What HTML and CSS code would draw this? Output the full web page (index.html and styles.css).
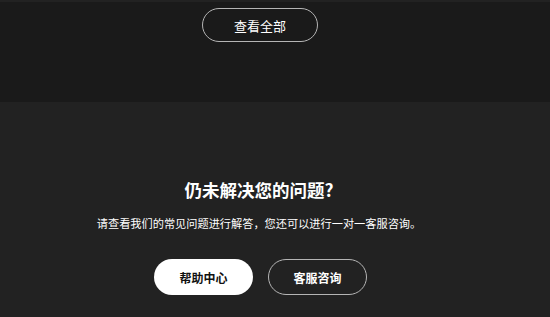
FILE: index.html
```html
<!DOCTYPE html>
<html lang="zh">
<head>
<meta charset="utf-8">
<link rel="stylesheet" href="styles.css">
</head>
<body>
<section class="more">
  <a class="btn btn-outline btn-more">查看全部</a>
</section>
<section class="help">
  <h2 class="help-title">仍未解决您的问题?</h2>
  <p class="help-text">请查看我们的常见问题进行解答，您还可以进行一对一客服咨询。</p>
  <div class="help-actions">
    <a class="btn btn-solid">帮助中心</a>
    <a class="btn btn-outline btn-bold">客服咨询</a>
  </div>
</section>
</body>
</html>
```
FILE: styles.css
```css
html, body {
  margin: 0;
  padding: 0;
  background: #222222;
  font-family: "Noto Sans CJK SC", "Noto Sans", sans-serif;
  color: #ffffff;
}
.more {
  margin-top: 2px;
  height: 100px;
  background: #1a1a1a;
  display: flex;
  justify-content: center;
  align-items: flex-start;
  padding: 6px 30px 0 0;
  box-sizing: border-box;
}
.btn {
  display: flex;
  align-items: center;
  justify-content: center;
  border-radius: 999px;
  box-sizing: border-box;
  text-decoration: none;
  cursor: pointer;
}
.btn-outline {
  border: 1px solid #b5b5b5;
  color: #ffffff;
}
.btn-more {
  width: 116px;
  height: 34px;
  font-size: 13px;
}
.help {
  display: flex;
  flex-direction: column;
  align-items: center;
  padding: 75px 32px 0 0;
}
.help-title {
  margin: 0;
  font-size: 17.5px;
  font-weight: 700;
  line-height: 25px;
}
.help-text {
  margin: 13px 0 0;
  font-size: 11.2px;
  line-height: 16px;
}
.help-actions {
  display: flex;
  gap: 15px;
  margin-top: 28px;
  padding-left: 3px;
}
.help-actions .btn {
  width: 99px;
  height: 36px;
  font-size: 12px;
  font-weight: 700;
}
.btn-solid {
  background: #ffffff;
  color: #111111;
}
```
